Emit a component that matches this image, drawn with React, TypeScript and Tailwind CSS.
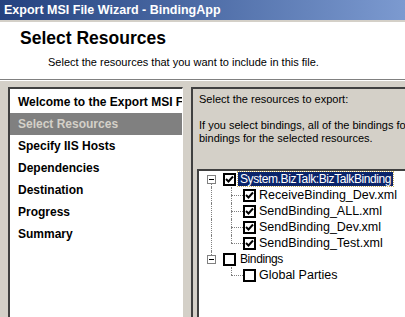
const steps = [
  { id: 1, title: "Welcome to the Export MSI File Wizard", selected: false },
  { id: 2, title: "Select Resources", selected: true },
  { id: 3, title: "Specify IIS Hosts", selected: false },
  { id: 4, title: "Dependencies", selected: false },
  { id: 5, title: "Destination", selected: false },
  { id: 6, title: "Progress", selected: false },
  { id: 7, title: "Summary", selected: false },
];

const tree = [
  {
    title: "System.BizTalk:BizTalkBinding",
    checked: true,
    focused: true,
    children: [
      { title: "ReceiveBinding_Dev.xml", checked: true },
      { title: "SendBinding_ALL.xml", checked: true },
      { title: "SendBinding_Dev.xml", checked: true },
      { title: "SendBinding_Test.xml", checked: true },
    ],
  },
  {
    title: "Bindings",
    checked: false,
    focused: false,
    children: [{ title: "Global Parties", checked: false }],
  },
];

const CheckBox = ({ checked }: { checked: boolean }) => (
  <div className="w-[13px] h-[13px] border-2 border-black bg-white flex items-center justify-center shrink-0">
    {checked && (
      <svg width="9" height="9" viewBox="0 0 9 9">
        <path d="M1 4 L3.5 6.5 L8 1.5" stroke="black" strokeWidth="2" fill="none" />
      </svg>
    )}
  </div>
);

const Expander = () => (
  <div className="absolute left-[8px] top-[4px] w-[9px] h-[9px] border border-[#808080] bg-white flex items-center justify-center z-10">
    <div className="w-[5px] h-px bg-black"></div>
  </div>
);

const App = () => {
  return (
    <div
      className="w-[405px] h-[317px] overflow-hidden bg-[#d4d0c8] flex flex-col"
      style={{ fontFamily: '"Liberation Sans", Arial, sans-serif' }}
    >
      <div className="h-[20px] shrink-0 bg-gradient-to-r from-[#24427f] to-[#7c9ad0] flex items-center px-[4px]">
        <p className="text-white text-[12.5px] font-bold whitespace-nowrap">
          Export MSI File Wizard - BindingApp
        </p>
      </div>
      <div className="h-[2px] bg-[#d4d0c8] shrink-0"></div>
      <div className="h-[58px] shrink-0 bg-white border-b border-[#808080] pl-[20px] pt-[4px]">
        <h1 className="text-[17.5px] font-bold text-black leading-[24px]">Select Resources</h1>
        <p className="text-[11px] text-black pl-[28px] mt-[4px] whitespace-nowrap">
          Select the resources that you want to include in this file.
        </p>
      </div>
      <div className="h-px bg-white shrink-0"></div>
      <div className="flex-1 flex pl-[8px] pt-[6px] gap-[8px] min-h-0">
        <div className="w-[175px] shrink-0 bg-white border-l-2 border-t-2 border-[#404040] border-r border-r-white overflow-hidden">
          <ul className="list-none pt-[2px]">
            {steps.map((item) => (
              <li
                key={item.id}
                className={`h-[22px] flex items-center pl-[8px] text-[12px] font-bold whitespace-nowrap overflow-hidden ${
                  item.selected ? "bg-[#808080] text-[#d4d0c8]" : "text-black"
                }`}
              >
                {item.title}
              </li>
            ))}
          </ul>
        </div>
        <div className="w-[260px] shrink-0 border-l-2 border-t-2 border-[#404040] pl-[6px] pt-[3px] flex flex-col">
          <p className="text-[11px] text-black whitespace-nowrap leading-[14px]">
            Select the resources to export:
          </p>
          <p className="text-[11px] text-black whitespace-nowrap leading-[13px] mt-[13px]">
            If you select bindings, all of the bindings for the selected resources will be
            <br />
            bindings for the selected resources.
          </p>
          <div className="flex-1 mt-[24px] -ml-[2px] bg-white border-l-2 border-t-2 border-[#404040]">
            {tree.map((node, ni) => {
              const lastRoot = ni === tree.length - 1;
              return (
                <div key={node.title}>
                  <div className="h-[16px] flex items-center">
                    <div className="w-[24px] h-full relative shrink-0">
                      <Expander />
                      {ni > 0 && (
                        <div className="absolute left-[12px] top-0 h-[4px] border-l border-dotted border-[#808080]"></div>
                      )}
                      {!lastRoot && (
                        <div className="absolute left-[12px] top-[12px] bottom-0 border-l border-dotted border-[#808080]"></div>
                      )}
                    </div>
                    <CheckBox checked={node.checked} />
                    <span
                      className={`ml-[2px] text-[12px] tracking-[-0.4px] leading-[14px] px-[2px] whitespace-nowrap ${
                        node.focused
                          ? "bg-[#0a246a] text-white outline outline-1 outline-dotted outline-[#c8b060]"
                          : "text-black"
                      }`}
                    >
                      {node.title}
                    </span>
                  </div>
                  {node.children.map((child, ci) => {
                    const lastChild = ci === node.children.length - 1;
                    return (
                      <div key={child.title} className="h-[16px] flex items-center">
                        <div className="w-[24px] h-full relative shrink-0">
                          {!lastRoot && (
                            <div className="absolute left-[12px] top-0 bottom-0 border-l border-dotted border-[#808080]"></div>
                          )}
                        </div>
                        <div className="w-[20px] h-full relative shrink-0">
                          <div
                            className={`absolute left-[8px] top-0 border-l border-dotted border-[#808080] ${
                              lastChild ? "h-[8px]" : "bottom-0"
                            }`}
                          ></div>
                          <div className="absolute left-[8px] right-0 top-[8px] border-t border-dotted border-[#808080]"></div>
                        </div>
                        <CheckBox checked={child.checked} />
                        <span className="ml-[2px] text-[12.5px] leading-[14px] px-[1px] text-black whitespace-nowrap">
                          {child.title}
                        </span>
                      </div>
                    );
                  })}
                </div>
              );
            })}
          </div>
        </div>
      </div>
    </div>
  );
};

export default App;
